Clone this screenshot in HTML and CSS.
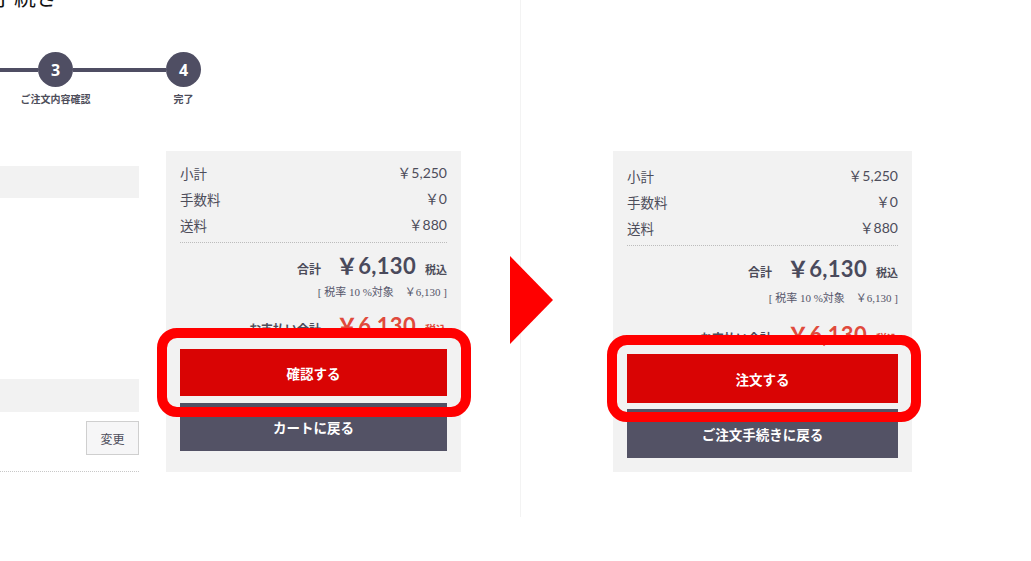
FILE: index.html
```html
<!DOCTYPE html>
<html lang="ja">
<head>
<meta charset="utf-8">
<title>ご注文手続き</title>
<link rel="stylesheet" href="styles.css">
</head>
<body>
<div class="stage">
  <section class="shot shot-a">
    <h1 class="page-title">ご注文手続き</h1>
    <div class="stepper">
      <span class="step-line step-line-lead"></span>
      <div class="step">
        <span class="step-num">3</span>
        <span class="step-label">ご注文内容確認</span>
      </div>
      <span class="step-line step-line-mid"></span>
      <div class="step">
        <span class="step-num">4</span>
        <span class="step-label">完了</span>
      </div>
    </div>
    <div class="main-row">
      <div class="form-col">
        <div class="form-bar"></div>
        <div class="form-space"></div>
        <div class="form-bar form-bar-2"></div>
        <div class="form-actions"><button class="change-btn">変更</button></div>
        <div class="form-rule"></div>
      </div>
      <aside class="panel panel-a">
        <div class="row"><span>小計</span><span class="num">￥5,250</span></div>
        <div class="row"><span>手数料</span><span class="num">￥0</span></div>
        <div class="row"><span>送料</span><span class="num">￥880</span></div>
        <div class="rule"></div>
        <div class="total"><span class="total-label">合計</span><span class="total-price">￥6,130</span><span class="total-tax">税込</span></div>
        <div class="tax-note">[ 税率 10 %対象　￥6,130 ]</div>
        <div class="total pay"><span class="total-label">お支払い合計</span><span class="total-price">￥6,130</span><span class="total-tax">税込</span></div>
        <button class="btn btn-primary">確認する</button>
        <button class="btn btn-dark">カートに戻る</button>
      </aside>
    </div>
  </section>
  <div class="arrow">
    <svg width="43" height="88" viewBox="0 0 43 88"><polygon points="0,0 43,44 0,88" fill="#ff0000"/></svg>
  </div>
  <section class="shot shot-b">
    <aside class="panel panel-b">
      <div class="row"><span>小計</span><span class="num">￥5,250</span></div>
      <div class="row"><span>手数料</span><span class="num">￥0</span></div>
      <div class="row"><span>送料</span><span class="num">￥880</span></div>
      <div class="rule"></div>
      <div class="total"><span class="total-label">合計</span><span class="total-price">￥6,130</span><span class="total-tax">税込</span></div>
      <div class="tax-note">[ 税率 10 %対象　￥6,130 ]</div>
      <div class="total pay"><span class="total-label">お支払い合計</span><span class="total-price">￥6,130</span><span class="total-tax">税込</span></div>
      <button class="btn btn-primary">注文する</button>
      <button class="btn btn-dark">ご注文手続きに戻る</button>
    </aside>
  </section>
</div>
</body>
</html>
```

FILE: styles.css
```css
* { box-sizing: border-box; }
html, body { margin: 0; padding: 0; background: #fff; }
body {
  width: 1031px;
  height: 561px;
  overflow: hidden;
  font-family: "Noto Sans CJK JP", "Noto Sans", sans-serif;
  color: #4d4d5a;
}
.stage { display: flex; align-items: flex-start; }

.shot-a {
  width: 521px;
  height: 517px;
  border-right: 1px solid #f3f3f3;
  overflow: hidden;
}
.page-title {
  margin: -20px 0 0 -74px;
  font-size: 22px;
  line-height: 30px;
  font-weight: 400;
  color: #111;
  white-space: nowrap;
}

.stepper { display: flex; align-items: flex-start; margin-top: 42px; }
.step-line { height: 4px; background: #4f4e63; margin-top: 16px; }
.step-line-lead { width: 38px; }
.step-line-mid { width: 93px; }
.step { width: 35px; display: flex; flex-direction: column; align-items: center; }
.step-num {
  width: 35px; height: 35px; border-radius: 50%;
  background: #4f4e63; color: #fff;
  display: flex; align-items: center; justify-content: center;
  font-family: "Open Sans", "Noto Sans", sans-serif;
  font-weight: 700; font-size: 16px;
}
.step-label {
  margin-top: 5px; font-size: 10px; line-height: 14px; font-weight: 700;
  white-space: nowrap; color: #4d4d5a;
}

.main-row { display: flex; gap: 27px; margin-top: 45px; }
.form-col { width: 139px; padding-top: 15px; display: flex; flex-direction: column; }
.form-bar { height: 32px; background: #f2f2f2; }
.form-space { height: 181px; }
.form-bar-2 { height: 33px; }
.form-actions { display: flex; justify-content: flex-end; margin-top: 9px; }
.change-btn {
  width: 53px; height: 34px; padding: 0;
  background: #f6f6f7; border: 1px solid #cfcfcf;
  font-family: "Noto Sans CJK JP", sans-serif; font-size: 12px; color: #4d4d5a;
}
.form-rule { margin-top: 16px; border-top: 1px dotted #c8c8c8; }

.panel { background: #f2f2f2; display: flex; flex-direction: column; }
.panel-a { width: 295px; padding: 9px 14px 13px; }
.row { display: flex; justify-content: space-between; font-size: 13.5px; line-height: 26px; }
.num { font-family: "Lato", "Noto Sans CJK JP", sans-serif; font-size: 14px; }
.rule { margin-top: 4px; border-top: 1px dotted #bcbcbc; }
.total { display: flex; justify-content: flex-end; align-items: baseline; height: 30px; line-height: 30px; margin-top: 8px; }
.total-label { font-size: 12px; font-weight: 700; margin-right: 15px; }
.total-price { font-family: "Lato", "Noto Sans CJK JP", sans-serif; font-size: 22px; font-weight: 700; color: #4a4a5c; letter-spacing: 0.3px; }
.total-tax { font-size: 11px; font-weight: 700; margin-left: 9px; }
.tax-note { text-align: right; font-size: 11px; line-height: 16px; margin-top: 3px; color: #55556a; font-family: "Liberation Serif", "Noto Sans CJK JP", serif; }
.pay { margin-top: 11px; }
.pay .total-price { color: #e04a3c; }
.pay .total-tax { color: #e04a3c; }

.btn {
  display: flex; align-items: center; justify-content: center;
  border: 0; padding: 0; width: 100%;
  font-family: "Noto Sans CJK JP", sans-serif; font-weight: 700; font-size: 13.5px; color: #fff;
}
.btn-primary { position: relative; z-index: 1; background: #d90404; height: 47px; margin-top: 8px; }
.btn-primary::after {
  content: ""; position: absolute;
  inset: -21px -24px -21px -23px;
  border: 10px solid #ff0000; border-radius: 20px;
}
.btn-dark { background: #535265; height: 48px; margin-top: 7px; }

.arrow { margin: 256px 0 0 -11px; width: 43px; height: 88px; position: relative; z-index: 2; }
.arrow svg { display: block; }

.shot-b { padding: 151px 0 0 60px; }
.panel-b { width: 299px; padding: 12px 14px 14px; }
.panel-b .total { margin-top: 8px; }
.panel-b .tax-note { margin-top: 6px; }
.panel-b .pay { margin-top: 14px; }
.panel-b .btn-primary { height: 49px; margin-top: 4px; }
.panel-b .btn-primary::after { inset: -19px -23px -19px -20px; }
.panel-b .btn-dark { height: 49px; margin-top: 6px; }
```
